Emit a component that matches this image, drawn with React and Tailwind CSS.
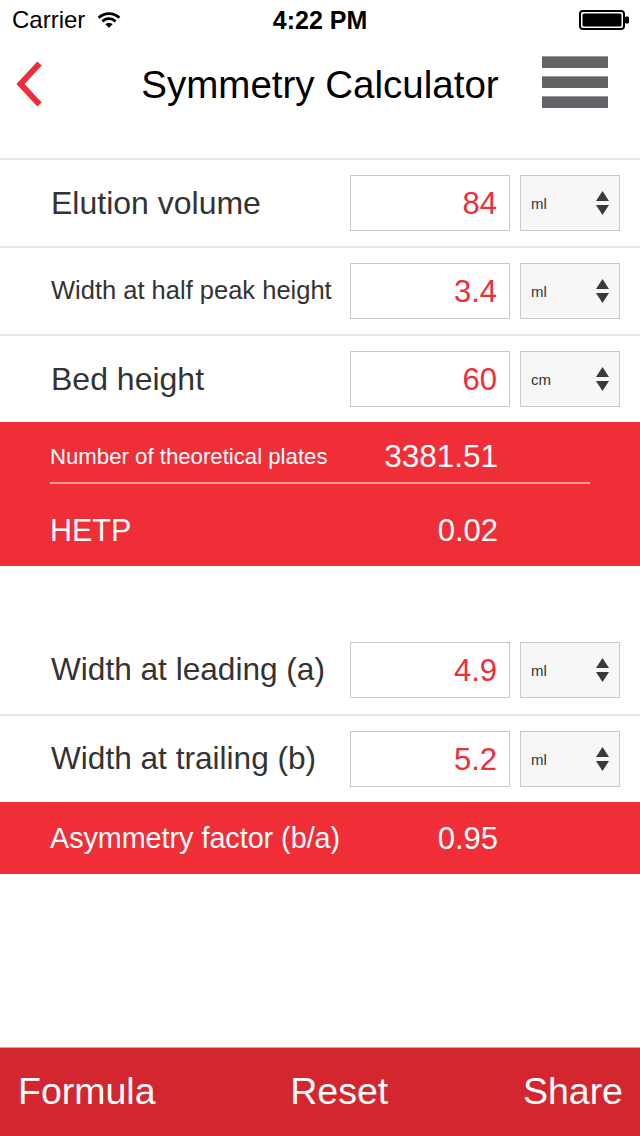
import React from "react";

const F = { fontFamily: '"Liberation Sans", Arial, Helvetica, sans-serif' };

function Wifi() {
  return (
    <svg width="24" height="16" viewBox="0 0 24 16" className="block">
      <path d="M1.6 5.8 A15 15 0 0 1 22.4 5.8" fill="none" stroke="#000" strokeWidth="2.8" />
      <path d="M5.4 9.4 A9.4 9.4 0 0 1 18.6 9.4" fill="none" stroke="#000" strokeWidth="2.8" />
      <path d="M12 15.8 L8.3 12.3 A5.2 5.2 0 0 1 15.7 12.3 Z" fill="#000" />
    </svg>
  );
}

function Battery() {
  return (
    <svg width="52" height="20" viewBox="0 0 52 20" className="block">
      <rect x="1" y="1" width="44" height="18" rx="3" fill="none" stroke="#000" strokeWidth="2" />
      <rect x="3.5" y="3.5" width="39" height="13" rx="1.5" fill="#000" />
      <rect x="46" y="6.5" width="4" height="7" rx="1.2" fill="#000" />
    </svg>
  );
}

function Arrows() {
  return (
    <svg width="13" height="24" viewBox="0 0 13 24" className="block">
      <path d="M6.5 0 L13 10 L0 10 Z" fill="#3a3a3a" />
      <path d="M0 14 L13 14 L6.5 24 Z" fill="#3a3a3a" />
    </svg>
  );
}

function InputRow({ label, value, unit, labelSize, height, border }) {
  return (
    <div
      className={`flex items-center pl-[51px] pr-[20px] ${height} ${border ? "border-b-2 border-[#e5e5e5]" : ""}`}
    >
      <div className={`flex-1 whitespace-nowrap leading-none text-[#333333] ${labelSize}`}>{label}</div>
      <div className="w-[160px] h-[56px] border border-[#c9c9c9] bg-white flex items-center justify-end pr-[12px] text-[31px] leading-none text-[#ee2e36]">
        {value}
      </div>
      <div className="ml-[10px] w-[100px] h-[56px] border border-[#c9c9c9] bg-[#f7f7f7] flex items-center justify-between pl-[10px] pr-[10px]">
        <span className="text-[15px] leading-none text-[#333333]">{unit}</span>
        <Arrows />
      </div>
    </div>
  );
}

export default function App() {
  return (
    <div style={F} className="w-[640px] h-[1136px] bg-white flex flex-col overflow-hidden">
      {/* status bar */}
      <div className="h-[40px] relative flex items-center pl-[12px] pr-[9px]">
        <div className="flex items-center gap-[12px]">
          <span className="text-[24px] leading-none text-black">Carrier</span>
          <Wifi />
        </div>
        <div className="absolute left-0 right-0 top-0 h-[40px] flex items-center justify-center pointer-events-none">
          <span className="text-[25px] leading-none font-bold text-black">4:22 PM</span>
        </div>
        <div className="ml-auto">
          <Battery />
        </div>
      </div>

      {/* nav bar */}
      <div className="h-[88px] relative flex items-center">
        <div className="pl-[14px] w-[100px]">
          <svg width="30" height="46" viewBox="0 0 30 46" className="block">
            <polyline points="25.5,2.5 6.5,23 25.5,43.5" fill="none" stroke="#ee2e36" strokeWidth="6" strokeLinejoin="miter" />
          </svg>
        </div>
        <div className="absolute inset-0 flex items-center justify-center pointer-events-none">
          <span className="text-[38.5px] leading-none text-black pt-[2px]">Symmetry Calculator</span>
        </div>
        <div className="ml-auto mr-[32px] flex flex-col gap-[8px] -mt-[4px]">
          <div className="w-[66px] h-[12px] bg-[#636367] border-t border-[#9b9b9f]" />
          <div className="w-[66px] h-[12px] bg-[#636367] border-t border-[#9b9b9f]" />
          <div className="w-[66px] h-[12px] bg-[#636367] border-t border-[#9b9b9f]" />
        </div>
      </div>
      <div className="h-[32px] border-b-2 border-[#e5e5e5]" />

      <InputRow label="Elution volume" value="84" unit="ml" labelSize="text-[32px]" height="h-[88px]" border />
      <InputRow label="Width at half peak height" value="3.4" unit="ml" labelSize="text-[25.5px]" height="h-[88px]" border />
      <InputRow label="Bed height" value="60" unit="cm" labelSize="text-[32px]" height="h-[86px]" />

      {/* result block */}
      <div className="h-[144px] bg-[#ef2e38] flex flex-col text-white">
        <div className="h-[60px] flex items-center pt-[10px] pl-[50px] pr-[142px]">
          <div className="flex-1 text-[22.2px] leading-none">Number of theoretical plates</div>
          <div className="text-[31.5px] leading-none">3381.51</div>
        </div>
        <div className="mx-[50px] h-[2px] bg-[#f69a9e]" />
        <div className="flex-1 flex items-center pt-[10px] pl-[50px] pr-[142px]">
          <div className="flex-1 text-[30.5px] leading-none">HETP</div>
          <div className="text-[31px] leading-none">0.02</div>
        </div>
      </div>

      <div className="h-[60px]" />

      <InputRow label="Width at leading (a)" value="4.9" unit="ml" labelSize="text-[31.6px]" height="h-[90px]" border />
      <InputRow label="Width at trailing (b)" value="5.2" unit="ml" labelSize="text-[31.6px]" height="h-[86px]" />

      <div className="h-[72px] bg-[#ef2e38] flex items-center pl-[50px] pr-[142px] text-white">
        <div className="flex-1 text-[28.7px] leading-none">Asymmetry factor (b/a)</div>
        <div className="text-[31px] leading-none">0.95</div>
      </div>

      <div className="flex-1" />

      {/* footer */}
      <div className="h-[89px] bg-[#d3262e] border-t border-[#b4b4b4] flex items-center justify-between pl-[18px] pr-[17px] text-white">
        <span className="text-[37.5px] leading-none">Formula</span>
        <span className="text-[37.5px] leading-none">Reset</span>
        <span className="text-[37.5px] leading-none">Share</span>
      </div>
    </div>
  );
}
